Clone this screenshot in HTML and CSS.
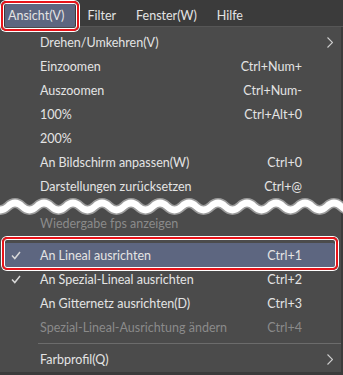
FILE: index.html
```html
<!DOCTYPE html>
<html lang="de">

<head>
    <meta charset="UTF-8">
    <title>Ansicht</title>
    <link rel="stylesheet" href="styles.css">
</head>

<body>
    <div class="bar">
        <span class="bar-item active">Ansicht(V)</span>
        <span class="bar-item">Filter</span>
        <span class="bar-item">Fenster(W)</span>
        <span class="bar-item">Hilfe</span>
    </div>
    <div class="menu">
        <div class="row"><span class="label">Drehen/Umkehren(V)</span><svg class="arrow" width="6" height="11" viewBox="0 0 6 11"><polyline points="0.5,0.5 5.5,5.5 0.5,10.5"/></svg></div>
        <div class="row"><span class="label">Einzoomen</span><span class="key">Ctrl+Num+</span></div>
        <div class="row"><span class="label">Auszoomen</span><span class="key">Ctrl+Num-</span></div>
        <div class="row"><span class="label">100%</span><span class="key">Ctrl+Alt+0</span></div>
        <div class="row"><span class="label">200%</span></div>
        <div class="row"><span class="label">An Bildschirm anpassen(W)</span><span class="key">Ctrl+0</span></div>
        <div class="row"><span class="label">Darstellungen zurücksetzen</span><span class="key">Ctrl+@</span></div>
        <div class="wave">
            <svg width="343" height="20" viewBox="0 0 343 20">
                <path class="wave-edge" d="M-21.25 8.5 q7.25 -7 14.5 0 t14.5 0 t14.5 0 t14.5 0 t14.5 0 t14.5 0 t14.5 0 t14.5 0 t14.5 0 t14.5 0 t14.5 0 t14.5 0 t14.5 0 t14.5 0 t14.5 0 t14.5 0 t14.5 0 t14.5 0 t14.5 0 t14.5 0 t14.5 0 t14.5 0 t14.5 0 t14.5 0 t14.5 0 t14.5 0 t14.5 0"/>
                <path class="wave-core" d="M-21.25 8.5 q7.25 -7 14.5 0 t14.5 0 t14.5 0 t14.5 0 t14.5 0 t14.5 0 t14.5 0 t14.5 0 t14.5 0 t14.5 0 t14.5 0 t14.5 0 t14.5 0 t14.5 0 t14.5 0 t14.5 0 t14.5 0 t14.5 0 t14.5 0 t14.5 0 t14.5 0 t14.5 0 t14.5 0 t14.5 0 t14.5 0 t14.5 0 t14.5 0"/>
            </svg>
        </div>
        <div class="row off"><span class="label">Wiedergabe fps anzeigen</span></div>
        <div class="sep hidden"></div>
        <div class="row hot">
            <span class="check"><svg width="10" height="9" viewBox="0 0 10 9"><polyline points="1,4.5 3.8,7.5 9,1"/></svg></span>
            <span class="label">An Lineal ausrichten</span><span class="key">Ctrl+1</span>
        </div>
        <div class="row">
            <span class="check"><svg width="10" height="9" viewBox="0 0 10 9"><polyline points="1,4.5 3.8,7.5 9,1"/></svg></span>
            <span class="label">An Spezial-Lineal ausrichten</span><span class="key">Ctrl+2</span>
        </div>
        <div class="row"><span class="label">An Gitternetz ausrichten(D)</span><span class="key">Ctrl+3</span></div>
        <div class="row off"><span class="label">Spezial-Lineal-Ausrichtung ändern</span><span class="key">Ctrl+4</span></div>
        <div class="sep"></div>
        <div class="row"><span class="label">Farbprofil(Q)</span><svg class="arrow" width="6" height="11" viewBox="0 0 6 11"><polyline points="0.5,0.5 5.5,5.5 0.5,10.5"/></svg></div>
    </div>
</body>

</html>
```

FILE: styles.css
```css
* {
    margin: 0;
    padding: 0;
    box-sizing: border-box;
}

body {
    width: 343px;
    height: 375px;
    overflow: hidden;
    background-color: #4b4b4b;
    font-family: Lato, "Noto Sans", sans-serif;
    font-size: 12.5px;
    color: #e4e4e4;
}

.bar {
    height: 27px;
    display: flex;
    align-items: center;
    background-color: #3b3b3b;
    border-bottom: 1px solid #565656;
    padding-left: 5px;
}

.bar-item {
    position: relative;
    height: 23px;
    line-height: 23px;
    padding: 0 3px;
    margin-right: 14px;
    margin-top: 4px;
    white-space: nowrap;
}

.bar-item.active {
    background-color: #5d6680;
    border-radius: 2px;
    padding-right: 11px;
    margin-right: 9px;
}

.bar-item.active::after {
    content: "";
    position: absolute;
    left: -4px;
    right: -4px;
    top: -3px;
    bottom: -4px;
    border: 2px solid #e8141a;
    border-radius: 5px;
    box-shadow: 0 0 0 1px #fff, inset 0 0 0 1px #fff;
}

.menu {
    height: 348px;
    padding-top: 3px;
    border-right: 2px solid #3b3b3b;
    border-bottom: 3px solid #3b3b3b;
}

.row {
    position: relative;
    height: 24px;
    display: flex;
    align-items: center;
    padding-left: 40px;
    white-space: nowrap;
}

.label {
    flex: 1;
    min-width: 0;
}

.key {
    width: 100px;
    text-align: right;
    margin-right: 39px;
}

.arrow {
    margin-right: 8px;
}

.arrow polyline {
    fill: none;
    stroke: #cfcfcf;
    stroke-width: 1.1;
}

.off {
    color: #8a8a8a;
}

.check {
    position: absolute;
    left: 11px;
    top: 8px;
    line-height: 0;
}

.check polyline {
    fill: none;
    stroke: #d8d8d8;
    stroke-width: 1.5;
}

.hot {
    background-color: #5d6680;
    margin: 0 6px 0 4px;
    padding-left: 36px;
    border-radius: 2px;
}

.hot .check {
    left: 7px;
}

.hot .key {
    margin-right: 33px;
}

.hot::after {
    content: "";
    position: absolute;
    left: -2px;
    right: -3px;
    top: -6px;
    bottom: -3px;
    border: 2px solid #e8141a;
    border-radius: 5px;
    box-shadow: 0 0 0 1px #fff, inset 0 0 0 1px #fff;
}

.sep {
    margin-left: 38px;
    border-bottom: 1px solid #6c6c6c;
    height: 5px;
    margin-bottom: 3px;
}

.sep.hidden {
    border-color: transparent;
}

.wave {
    height: 20px;
    margin-bottom: -7px;
    line-height: 0;
}

.wave path {
    fill: none;
}

.wave-edge {
    stroke: #9b9b9b;
    stroke-width: 10;
}

.wave-core {
    stroke: #fff;
    stroke-width: 6.5;
}
```
